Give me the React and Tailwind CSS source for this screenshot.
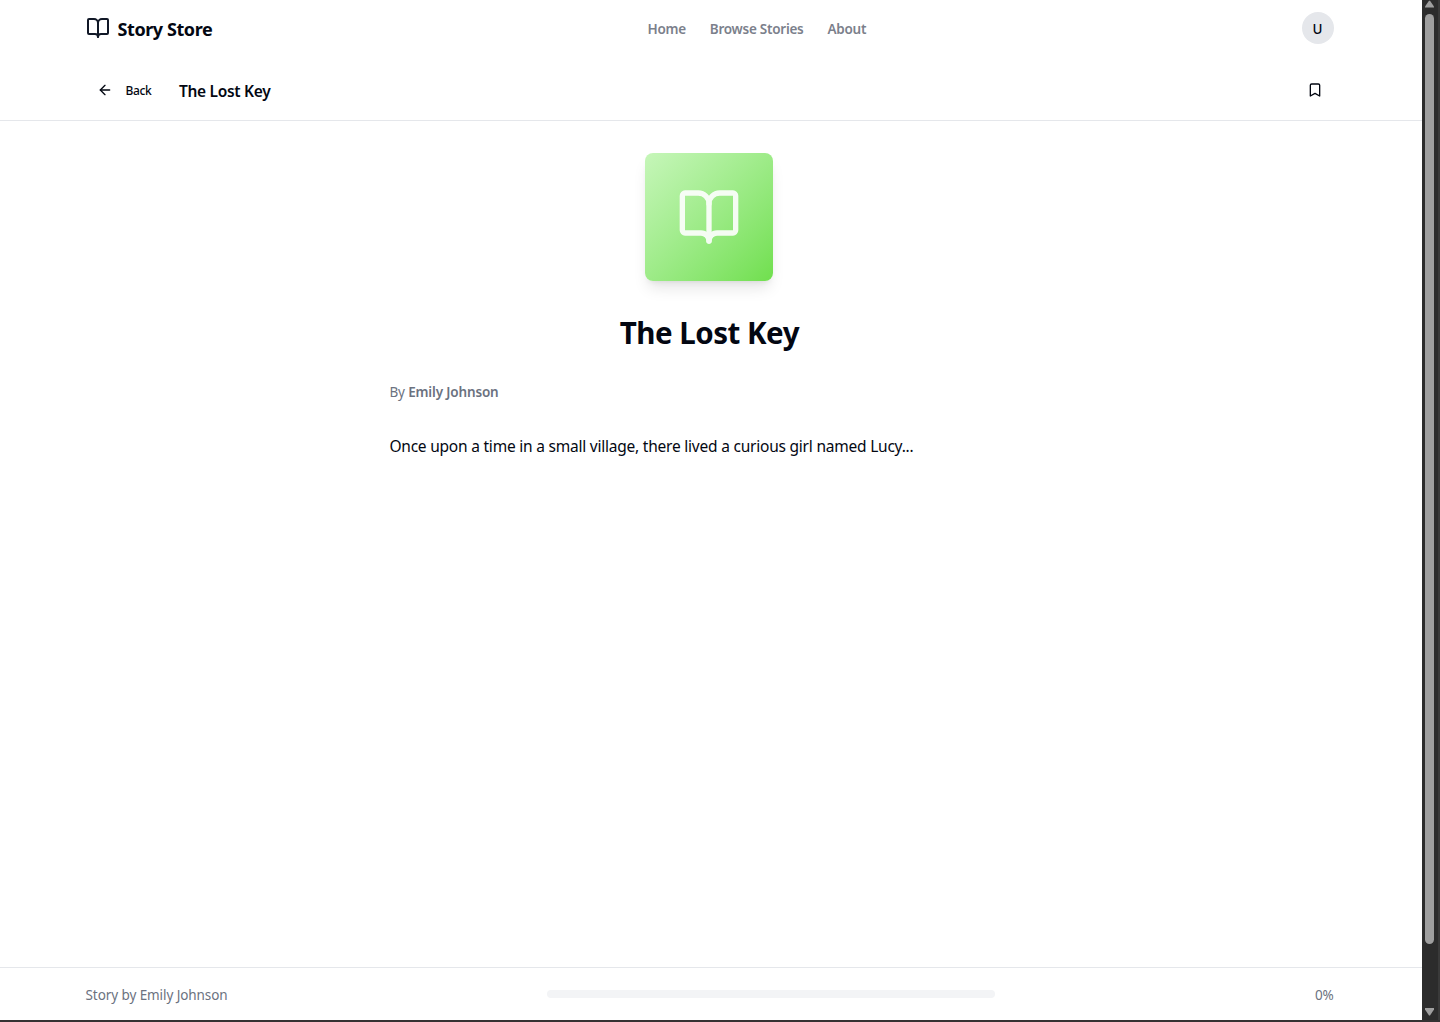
import { ArrowLeft, Bookmark, BookOpen } from "lucide-react";

function Header() {
  return (
    <header className="mx-auto flex h-14 w-[1248px] shrink-0 items-center">
      <a className="flex w-[562px] items-center gap-2">
        <BookOpen className="h-6 w-6 text-[#111827]" strokeWidth={2} />
        <span className="mt-0.5 text-[18px] leading-7 font-bold tracking-[-0.42px]">Story Store</span>
      </a>
      <nav className="mt-0.5 flex gap-6 text-[13.5px] leading-5 font-semibold tracking-[-0.26px] text-[#7b808b]">
        <a>Home</a>
        <a>Browse Stories</a>
        <a>About</a>
      </nav>
      <div className="ml-auto flex h-8 w-8 items-center justify-center rounded-full bg-[#e5e7eb] pt-0.5 text-[13.5px] font-medium">
        U
      </div>
    </header>
  );
}

function StoryBar() {
  return (
    <div className="flex h-[65px] shrink-0 border-b border-[#e5e7eb] pr-[3.2px]">
      <div className="mx-auto flex w-[1248px] items-center justify-between pt-1">
        <div className="flex items-center">
          <button className="flex items-center gap-3 pl-3 text-xs font-medium">
            <ArrowLeft className="h-4 w-4" />
            <span className="mt-0.5 w-[26px] tracking-[-0.4px]">Back</span>
          </button>
          <span className="mt-0.5 ml-[27.5px] text-[15.5px] leading-6 font-semibold tracking-[-0.3px]">The Lost Key</span>
        </div>
        <Bookmark className="mr-2.5 h-4 w-4" />
      </div>
    </div>
  );
}

function Scrollbar() {
  return (
    <div className="flex h-[1020px] w-[18px] flex-col items-center border-r-2 border-[#3a3a3a] bg-[#2c2c2c]">
      <svg className="mr-px h-3.5 w-[9px] shrink-0" viewBox="0 0 9 14" fill="#9f9f9f">
        <path d="M4 0.8h1L9 6.5V7.5H0V6.5z" />
      </svg>
      <div className="mr-px h-[930px] w-[9px] rounded-full bg-[#9f9f9f]" />
      <svg className="mt-16 mr-px h-2 w-[9px] shrink-0" viewBox="0 0 9 8" fill="#9f9f9f">
        <path d="M0 0h9v1.5L5 7.5H4L0 1.5z" />
      </svg>
    </div>
  );
}

export default function App() {
  return (
    <div className="flex h-[1022px] w-[1440px] overflow-hidden border-b-2 border-[#353233] bg-white font-['Noto_Sans','Open_Sans',sans-serif] text-[#030712]">
      <div className="flex w-[1422px] flex-col">
        <div className="pr-[3px]">
          <Header />
        </div>
        <StoryBar />
        <main className="flex-1 pt-8 pr-[3.2px]">
          <article className="mx-auto flex w-[640px] flex-col">
            <div className="mx-auto flex h-32 w-32 items-center justify-center rounded-lg bg-linear-to-br from-[#c6f6b9] to-[#70df4d] shadow-lg">
              <BookOpen className="h-16 w-16 text-white opacity-90" />
            </div>
            <h1 className="mt-[34px] text-center text-[29.5px] leading-9 font-bold tracking-[-0.5px]">The Lost Key</h1>
            <p className="mt-[31px] text-[13.5px] leading-5 tracking-[-0.15px] text-[#6b7280]">
              By <span className="font-semibold">Emily Johnson</span>
            </p>
            <p className="mt-[30px] text-[15.5px] leading-7 tracking-[-0.22px] whitespace-nowrap">
              Once upon a time in a small village, there lived a curious girl named Lucy...
            </p>
          </article>
        </main>
        <footer className="h-[53px] shrink-0 border-t border-[#e5e7eb] pr-[3px]">
          <div className="mx-auto flex h-[52px] w-[1248px] items-center text-[13.5px] text-[#6b7280]">
            <span className="mt-[3px] w-[461.5px] tracking-[-0.08px]">Story by Emily Johnson</span>
            <div className="h-2 w-[448px] rounded-full bg-[#f3f4f6]" />
            <span className="mt-[3px] ml-auto tracking-[-0.2px]">0%</span>
          </div>
        </footer>
      </div>
      <Scrollbar />
    </div>
  );
}
